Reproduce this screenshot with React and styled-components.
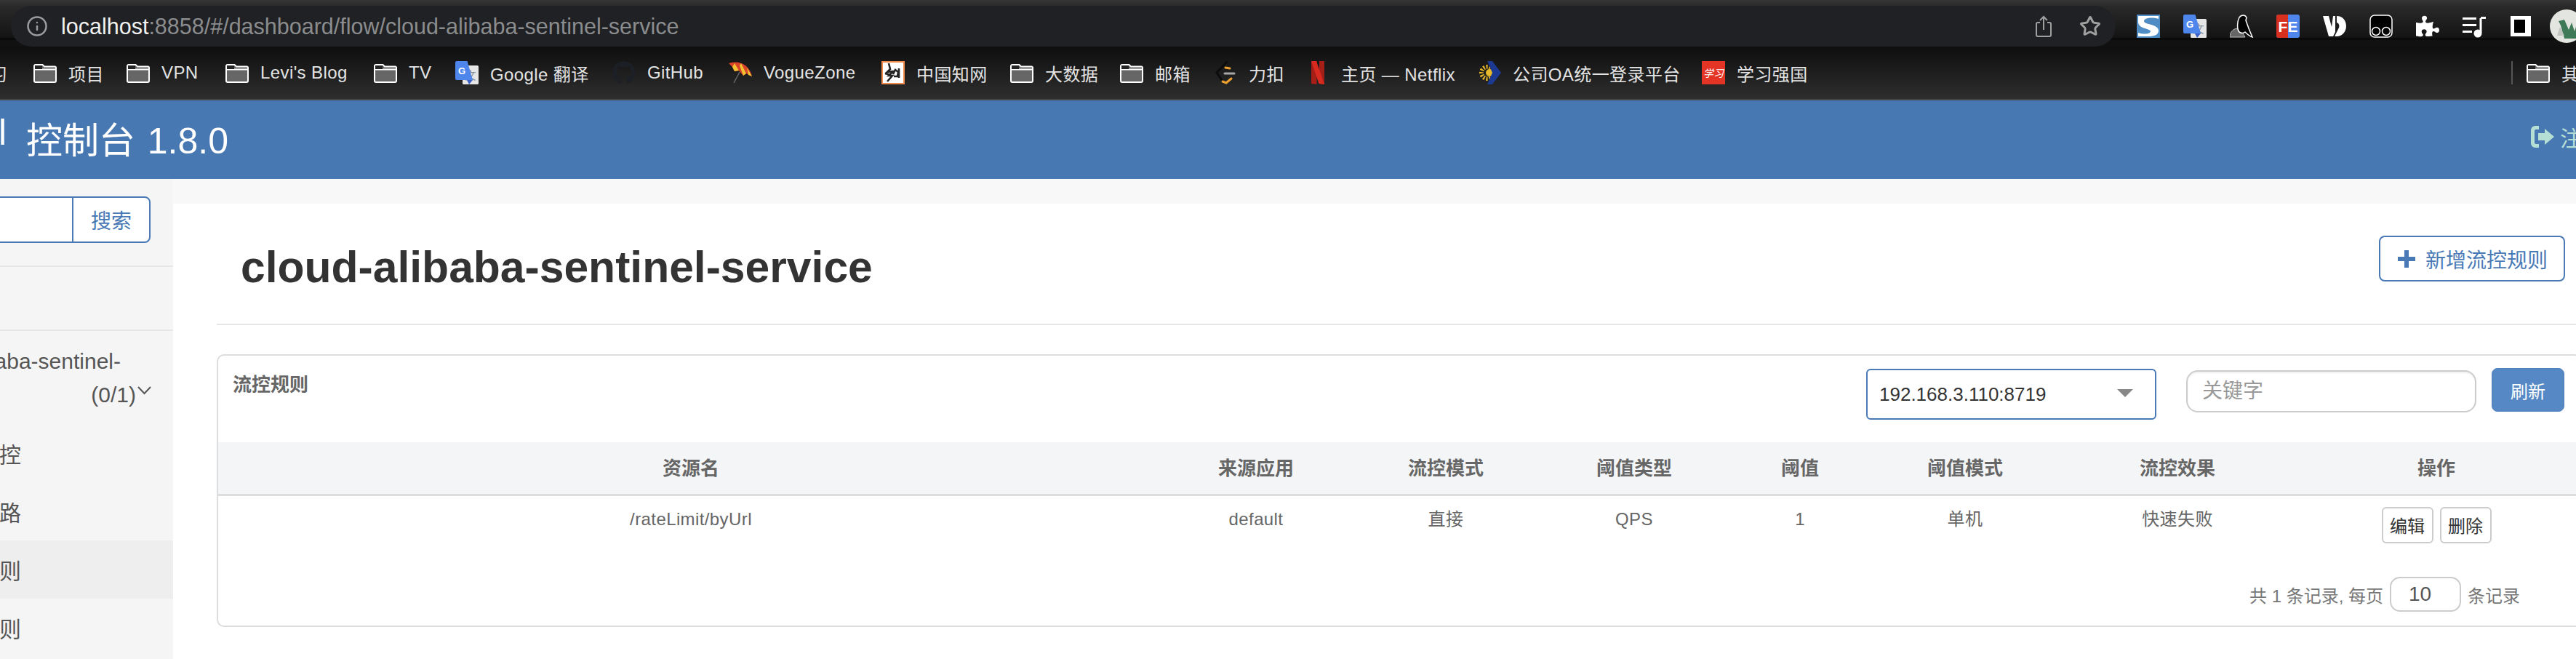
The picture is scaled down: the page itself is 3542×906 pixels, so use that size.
import React from "react";
import styled, { createGlobalStyle } from "styled-components";
import { FaGithub, FaPuzzlePiece } from "react-icons/fa";
import { Info, Star } from "lucide-react";

const FONT = `"Liberation Sans", "Noto Sans CJK SC", sans-serif`;
const BLUE = "#4a7ab5";

const Global = createGlobalStyle`
  html, body {
    margin: 0;
    width: 3542px;
    height: 906px;
    overflow: hidden;
    background: #fff;
    font-family: ${FONT};
  }
  * { box-sizing: border-box; }
`;

const Page = styled.div`
  width: 3542px;
  height: 906px;
  overflow: hidden;
  display: flex;
  flex-direction: column;
`;

/* browser chrome */
const Toolbar = styled.div`
  height: 64px;
  flex-shrink: 0;
  padding: 8px 0 0 15px;
  display: flex;
  align-items: center;
  background: linear-gradient(#363636 0, #2a2a2a 8px, #141414 52px, #0a0a0a 52px, #0a0a0a 55px, #111 55px);
`;

const AddressPill = styled.div`
  width: 2894px;
  height: 56px;
  flex-shrink: 0;
  border-radius: 28px;
  background: #202124;
  display: flex;
  align-items: center;
  padding: 0 20px 0 21px;
  color: #9a9b9d;
`;

const Url = styled.div`
  margin-left: 18px;
  flex: 1;
  font-size: 30.5px;
  color: #8b8c8e;
  white-space: nowrap;
  b { font-weight: 400; color: #f1f1f1; }
`;

const PillIcon = styled.svg`
  margin-left: ${(p) => p.$gap || 0}px;
  flex-shrink: 0;
`;

const Extensions = styled.div`
  display: flex;
  align-items: center;
  gap: 32px;
  margin-left: 29px;
  flex-shrink: 0;
`;

const ExtIcon = styled.svg`
  width: 32px;
  height: 32px;
  flex-shrink: 0;
`;

const Avatar = styled.svg`
  width: 46px;
  height: 46px;
  margin-left: -8px;
  flex-shrink: 0;
`;

const BookmarkBar = styled.div`
  height: 72px;
  flex-shrink: 0;
  display: flex;
  align-items: center;
  gap: 32px;
  background: linear-gradient(#0e0e0e, #2e2e2e);
  color: #e4e4e4;
  font-size: 24px;
  border-bottom: 0;
`;

const ClippedLabel = styled.div`
  width: 10px;
  margin-right: 4px;
  display: flex;
  justify-content: flex-end;
  white-space: nowrap;
  flex-shrink: 0;
`;

const Bookmark = styled.div`
  display: flex;
  align-items: center;
  gap: 16px;
  flex-shrink: 0;
`;

const BookmarkLabel = styled.span`
  width: ${(p) => (p.$w ? `${p.$w}px` : "auto")};
  white-space: nowrap;
  letter-spacing: 0.4px;
`;

const OtherBookmarks = styled.div`
  margin-left: auto;
  width: 89px;
  height: 32px;
  border-left: 2px solid #555;
  padding-left: 19px;
  display: flex;
  align-items: center;
  gap: 16px;
  flex-shrink: 0;
  overflow: hidden;
  white-space: nowrap;
`;

const ChromeEdge = styled.div`
  height: 2px;
  flex-shrink: 0;
  background: #454545;
`;

const IconBox = styled.svg`
  width: 32px;
  height: 32px;
  flex-shrink: 0;
`;

/* app header */
const Navbar = styled.header`
  height: 108px;
  flex-shrink: 0;
  background: #4878b2;
  display: flex;
  align-items: center;
  justify-content: space-between;
  color: #fff;
`;

const Brand = styled.div`
  width: 314px;
  display: flex;
  justify-content: flex-end;
  white-space: pre;
  font-size: 50px;
  word-spacing: 3px;
  flex-shrink: 0;
  margin-top: -6px;
`;

const BrandName = styled.span`
  margin-right: 10px;
`;

const Logout = styled.div`
  width: 62px;
  display: flex;
  align-items: center;
  gap: 8px;
  font-size: 30px;
  color: #b5ded5;
  white-space: nowrap;
  flex-shrink: 0;
  margin-top: -8px;
`;

const Body = styled.div`
  flex: 1;
  min-height: 0;
  display: flex;
`;

/* sidebar, scrolled partly off the left edge */
const Aside = styled.aside`
  width: 238px;
  flex-shrink: 0;
  background: #f5f5f5;
  overflow: hidden;
  color: #555;
  font-size: 30px;
`;

const SearchBlock = styled.div`
  height: 121px;
  padding-top: 24px;
  border-bottom: 2px solid #e7e7e7;
`;

const SearchGroup = styled.div`
  width: 227px;
  height: 64px;
  margin-left: -20px;
  display: flex;
  background: #fff;
  border: 2px solid ${BLUE};
  border-radius: 8px;
`;

const SearchInput = styled.div`
  flex: 1;
`;

const SearchButton = styled.div`
  width: 106px;
  border-left: 2px solid ${BLUE};
  color: ${BLUE};
  font-size: 28px;
  display: flex;
  align-items: center;
  justify-content: center;
`;

const HomeRow = styled.div`
  height: 88px;
  border-bottom: 2px solid #e7e7e7;
`;

const ServiceRow = styled.div`
  height: 128px;
  padding: 19px 0;
  line-height: 46px;
`;

const ServiceLine = styled.div`
  display: flex;
  justify-content: flex-end;
  align-items: center;
  white-space: nowrap;
  padding-right: ${(p) => p.$right}px;
`;

const NavItem = styled.div`
  height: 80px;
  display: flex;
  justify-content: flex-end;
  align-items: center;
  padding-right: 209px;
  white-space: nowrap;
  background: ${(p) => (p.$active ? "#eee" : "transparent")};
`;

/* main content */
const Main = styled.main`
  flex: 1;
  min-width: 0;
  background: #f8f8f8;
  padding-top: 34px;
  overflow: hidden;
`;

const Sheet = styled.div`
  height: 100%;
  background: #fff;
  padding-left: 60px;
`;

const Content = styled.div`
  width: 3252px;
`;

const PageHead = styled.div`
  height: 167px;
  display: flex;
  justify-content: space-between;
  align-items: flex-start;
  border-bottom: 2px solid #e6e6e6;
  padding: 0 23px 0 33px;
`;

const Title = styled.h1`
  margin: 52px 0 0;
  font-size: 60.6px;
  line-height: 70px;
  font-weight: 700;
  color: #333;
`;

const AddButton = styled.button`
  margin-top: 44px;
  width: 256px;
  height: 63px;
  background: #fff;
  border: 2px solid ${BLUE};
  border-radius: 8px;
  color: ${BLUE};
  font: 28px ${FONT};
  display: flex;
  align-items: center;
  padding: 0 0 0 24px;
  gap: 14px;
`;

const Panel = styled.section`
  margin-top: 40px;
  height: 375px;
  border: 2px solid #ddd;
  border-radius: 10px;
  overflow: hidden;
`;

const PanelHead = styled.div`
  height: 119px;
  display: flex;
  align-items: flex-start;
  padding-left: 20px;
`;

const PanelTitle = styled.div`
  margin-top: 22px;
  line-height: 36px;
  font-size: 26px;
  font-weight: 700;
  color: #666;
  margin-right: auto;
`;

const SelectBox = styled.div`
  width: 399px;
  height: 70px;
  margin-top: 18px;
  border: 2px solid ${BLUE};
  border-radius: 6px;
  padding: 0 30px 0 16px;
  display: flex;
  align-items: center;
  justify-content: space-between;
  font-size: 26px;
  color: #333;
`;

const Caret = styled.span`
  width: 0;
  height: 0;
  margin-top: -4px;
  border-left: 11px solid transparent;
  border-right: 11px solid transparent;
  border-top: 11px solid #888;
`;

const KeywordInput = styled.input`
  width: 399px;
  height: 58px;
  margin: 20px 0 0 41px;
  border: 2px solid #ccc;
  border-radius: 16px;
  padding: 0 20px;
  outline: none;
  font: 28px ${FONT};
  box-shadow: inset 0 2px 2px rgba(0, 0, 0, 0.06);
  &::placeholder { color: #999; }
`;

const RefreshButton = styled.button`
  width: 100px;
  height: 60px;
  margin: 17px 22px 0 21px;
  background: #5588c4;
  border: 1px solid #4e80bb;
  border-radius: 8px;
  color: #fff;
  font: 24px ${FONT};
  padding: 0;
`;

const Table = styled.table`
  width: 3248px;
  table-layout: fixed;
  border-collapse: collapse;
  font-size: 24px;
  color: #666;
`;

const Th = styled.th`
  height: 72px;
  background: #f4f5f7;
  border-bottom: 3px solid #ddd;
  font-size: 26px;
  font-weight: 700;
  color: #666;
  padding: 0 0 4px;
  &:last-child { padding-right: 10px; }
`;

const Td = styled.td`
  height: 100px;
  padding: 15px 0 0;
  text-align: center;
  vertical-align: top;
  line-height: 34px;
  letter-spacing: 0.4px;
  &:last-child { padding-right: 10px; }
`;

const RowButtons = styled.div`
  display: flex;
  justify-content: center;
  gap: 9px;
`;

const RowButton = styled.button`
  width: 71px;
  height: 50px;
  background: #fff;
  border: 2px solid #ccc;
  border-radius: 6px;
  color: #333;
  font: 24px ${FONT};
  padding: 0;
`;

const Pager = styled.div`
  margin-top: 13px;
  padding-right: 83px;
  display: flex;
  justify-content: flex-end;
  align-items: center;
  gap: 9px;
  font-size: 24px;
  color: #777;
`;

const PageSize = styled.input`
  width: 98px;
  height: 48px;
  border: 2px solid #ccc;
  border-radius: 14px;
  padding: 0 0 0 24px;
  font: 28px ${FONT};
  color: #555;
  outline: none;
`;

const Folder = () => (
  <IconBox viewBox="0 0 32 32">
    <path d="M1 6.500V27a2 2 0 0 0 2 2h26a2 2 0 0 0 2-2V9a1.500 1.500 0 0 0-1.500-1.500H15L12.500 5H3a2 2 0 0 0-2 1.500Z" fill="#666" stroke="#fff" strokeWidth="2" />
    <path d="M1.500 11.500h29" stroke="#fff" strokeWidth="2" />
    <path d="M2 6h10v5H2z" fill="#262626" />
  </IconBox>
);

const GoogleTranslate = ({ as }) => (
  <IconBox as={as} viewBox="0 0 32 32">
    <rect x="10" y="6" width="22" height="26" rx="1.500" fill="#e6e6e6" />
    <text x="21" y="25" fontSize="15" textAnchor="middle" fill="#8a8f98" fontFamily="Noto Sans CJK SC">文</text>
    <path d="M2 0h14.500L24 26H2a2 2 0 0 1-2-2V2a2 2 0 0 1 2-2Z" fill="#4f86ec" />
    <path d="M16 26h8l-5 6Z" fill="#3b5fc4" />
    <text x="9" y="18" fontSize="13" fontWeight="700" textAnchor="middle" fill="#fff" fontFamily="Liberation Sans">G</text>
  </IconBox>
);

const Umbrella = () => (
  <IconBox viewBox="0 0 32 32">
    <path d="M15 15 7 30" stroke="#6a6a6a" strokeWidth="1.500" />
    <path d="M0 3Q14-1 23 6 30 12 32 21L24 17 20 20 14 13 8 14 5 8Z" fill="#d8432a" />
    <path d="M8 3 14 13 8 14 5 8ZM17 3 24 17 20 20 15 6ZM25 9 32 21 27 19Z" fill="#f2c230" />
  </IconBox>
);

const Cnki = () => (
  <IconBox viewBox="0 0 32 32">
    <rect x="1" y="1" width="30" height="30" fill="#fff" stroke="#ee8a4c" strokeWidth="2" />
    <path d="M10 3l2 8-4 4 8-1-6 6 5 0-7 8M5 17l8 2M16 18l3-6 4 3-1 6-5 0M24 10v13" stroke="#222" strokeWidth="2.600" fill="none" />
  </IconBox>
);

const LeetCode = () => (
  <IconBox viewBox="0 0 32 32">
    <path d="M18 1 4 16l9 13" stroke="#0c0c0c" strokeWidth="3" fill="none" strokeLinecap="round" />
    <path d="M22 10l-6-1M12 28l5 2 7-6" stroke="#eea12e" strokeWidth="3" fill="none" strokeLinecap="round" />
    <path d="M15 17h13" stroke="#a8a8a8" strokeWidth="3" strokeLinecap="round" />
  </IconBox>
);

const Netflix = () => (
  <IconBox viewBox="0 0 32 32">
    <path d="M7 0h7.500v32L7 31Z" fill="#a51e18" />
    <path d="M18 0h7v32l-7-1Z" fill="#a51e18" />
    <path d="M7 0h7l11 32-7.500-1Z" fill="#d92a20" />
  </IconBox>
);

const ChevronLogo = () => (
  <IconBox viewBox="0 0 32 32">
    <circle cx="13" cy="16" r="8" fill="none" stroke="#e8b92a" strokeWidth="6" strokeDasharray="2 2" />
    <circle cx="16" cy="16" r="5" fill="#e8b92a" />
    <path d="M13 0h7l12 16-12 16h-7l7-16Z" fill="#1c3a92" />
  </IconBox>
);

const XuexiLogo = () => (
  <IconBox viewBox="0 0 32 32">
    <rect width="32" height="32" fill="#e33426" />
    <text x="16" y="22" fontSize="14" fontStyle="italic" textAnchor="middle" fill="#fff" fontFamily="Noto Sans CJK SC">学习</text>
  </IconBox>
);

const BOOKMARKS = [
  { icon: <Folder />, label: "项目", w: 48 },
  { icon: <Folder />, label: "VPN", w: 56 },
  { icon: <Folder />, label: "Levi's Blog", w: 124 },
  { icon: <Folder />, label: "TV", w: 32 },
  { icon: <GoogleTranslate />, label: "Google 翻译", w: 136 },
  { icon: <FaGithub size={32} color="#1c2026" />, label: "GitHub", w: 80 },
  { icon: <Umbrella />, label: "VogueZone", w: 130 },
  { icon: <Cnki />, label: "中国知网", w: 97 },
  { icon: <Folder />, label: "大数据", w: 71 },
  { icon: <Folder />, label: "邮箱", w: 49 },
  { icon: <LeetCode />, label: "力扣", w: 47 },
  { icon: <Netflix />, label: "主页 — Netflix", w: 156 },
  { icon: <ChevronLogo />, label: "公司OA统一登录平台", w: 228 },
  { icon: <XuexiLogo />, label: "学习强国" },
];

const COLUMNS = [
  ["资源名", 1300],
  ["来源应用", 254],
  ["流控模式", 268],
  ["阈值类型", 250],
  ["阈值", 206],
  ["阈值模式", 248],
  ["流控效果", 336],
  ["操作", 386],
];

const ROW = ["/rateLimit/byUrl", "default", "直接", "QPS", "1", "单机", "快速失败"];

export default function App() {
  return (
    <Page>
      <Global />
      <Toolbar>
        <AddressPill>
          <Info size={30} strokeWidth={2} />
          <Url>
            <b>localhost</b>:8858/#/dashboard/flow/cloud-alibaba-sentinel-service
          </Url>
          <PillIcon width="22" height="30" viewBox="0 0 22 30" fill="none" stroke="#a0a0a0" strokeWidth="2">
            <path d="M6 10H3a2 2 0 0 0-2 2v15a2 2 0 0 0 2 2h16a2 2 0 0 0 2-2V12a2 2 0 0 0-2-2h-3" />
            <path d="M11 20V2M6 7l5-5 5 5" />
          </PillIcon>
          <PillIcon as={Star} $gap={38} size={30} color="#a0a0a0" strokeWidth={2.4} />
        </AddressPill>
        <Extensions>
          <ExtIcon viewBox="0 0 32 32">
            <rect width="32" height="32" fill="#4f8cc4" />
            <path d="M2 2h28v4C20 3 10 5 10 9c0 5 20 4 20 13 0 6-6 8-14 8H2v-5c10 3 17 1 17-2 0-4-17-3-17-13Z" fill="#fff" />
          </ExtIcon>
          <GoogleTranslate as={ExtIcon} />
          <ExtIcon viewBox="0 0 32 32">
            <path d="M0 31C0 23 6 18 14 19L21 31Z" fill="#666" stroke="#bbb" strokeWidth="1" />
            <path d="M13 4C16 0 21 0 23 4L22 8C24 14 27 22 31 31 27 30 24 27 21 24 17 27 12 25 11 20 10 14 11 8 13 4Z" fill="#000" stroke="#fff" strokeWidth="1.500" />
          </ExtIcon>
          <ExtIcon viewBox="0 0 32 32">
            <rect width="32" height="32" rx="3" fill="#4f86ec" />
            <path d="M3 0h13v32H3a3 3 0 0 1-3-3V3a3 3 0 0 1 3-3Z" fill="#d8301f" />
            <text x="16" y="24" fontSize="21" fontWeight="700" textAnchor="middle" fill="#fff" fontFamily="Liberation Sans">FE</text>
          </ExtIcon>
          <ExtIcon viewBox="0 0 32 32">
            <path d="M0 2h8l4 15 2-15h3v22l-3 6h-6Z" fill="#fff" />
            <path d="M19 2c8 0 13 6 13 14s-6 14-13 14h-3l6-12c1-3 0-6-3-7Z" fill="#fff" />
          </ExtIcon>
          <ExtIcon viewBox="0 0 32 32" fill="none" stroke="#fff">
            <rect x="1" y="1" width="30" height="30" rx="6" fill="#000" strokeWidth="1.500" />
            <circle cx="9" cy="23" r="5.500" strokeWidth="1.500" />
            <circle cx="23" cy="23" r="5.500" strokeWidth="1.500" />
          </ExtIcon>
          <ExtIcon as={FaPuzzlePiece} color="#fff" />
          <ExtIcon viewBox="0 0 32 32">
            <path d="M0 4h19v3H0zM0 13h19v3H0zM0 22h13v3H0z" fill="#fff" />
            <path d="M25 5v20" stroke="#fff" strokeWidth="3" />
            <path d="M25 3h7v3h-7z" fill="#fff" />
            <circle cx="21" cy="26" r="5.500" fill="#fff" />
          </ExtIcon>
          <ExtIcon viewBox="0 0 32 32">
            <rect x="2" y="2" width="28" height="28" fill="#fff" />
            <rect x="7" y="7" width="15" height="18" fill="#000" />
          </ExtIcon>
          <Avatar viewBox="0 0 46 46">
            <circle cx="23" cy="23" r="23" fill="#e3e5e1" />
            <path d="M12 16l8-2 6 14 4-10 4 12 4-12 6 2-4 20H20l-5-18Z" fill="#3f7a58" />
            <path d="M14 24l6 12H10Z" fill="#bfc3bd" />
          </Avatar>
        </Extensions>
      </Toolbar>

      <BookmarkBar>
        <ClippedLabel>学习</ClippedLabel>
        {BOOKMARKS.map((b) => (
          <Bookmark key={b.label}>
            {b.icon}
            <BookmarkLabel $w={b.w}>{b.label}</BookmarkLabel>
          </Bookmark>
        ))}
        <OtherBookmarks>
          <Folder />
          其他书签
        </OtherBookmarks>
      </BookmarkBar>
      <ChromeEdge />

      <Navbar>
        <Brand>
          <BrandName>Sentinel </BrandName>控制台 1.8.0
        </Brand>
        <Logout>
          <svg width="32" height="30" viewBox="0 0 32 30" fill="#b5ded5" style={{ flexShrink: 0 }}>
            <path d="M11 0H6a6 6 0 0 0-6 6v18a6 6 0 0 0 6 6h5v-5H7a2 2 0 0 1-2-2V7a2 2 0 0 1 2-2h4Z" />
            <path d="M10 10h9V4l13 11-13 11v-6h-9Z" />
          </svg>
          注销
        </Logout>
      </Navbar>

      <Body>
        <Aside>
          <SearchBlock>
            <SearchGroup>
              <SearchInput />
              <SearchButton>搜索</SearchButton>
            </SearchGroup>
          </SearchBlock>
          <HomeRow />
          <ServiceRow>
            <ServiceLine $right={72}>cloud-alibaba-sentinel-</ServiceLine>
            <ServiceLine $right={30}>
              (0/1)
              <svg width="19" height="12" viewBox="0 0 19 12" fill="none" stroke="#555" strokeWidth="2" style={{ margin: "-12px 0 0 2px" }}>
                <path d="M1 1l8.500 9L18 1" />
              </svg>
            </ServiceLine>
          </ServiceRow>
          <NavItem>实时监控</NavItem>
          <NavItem>簇点链路</NavItem>
          <NavItem $active>流控规则</NavItem>
          <NavItem>降级规则</NavItem>
        </Aside>

        <Main>
          <Sheet>
            <Content>
              <PageHead>
                <Title>cloud-alibaba-sentinel-service</Title>
                <AddButton>
                  <svg width="24" height="24" viewBox="0 0 24 24" fill={BLUE}>
                    <path d="M9 0h6v9h9v6h-9v9H9v-9H0V9h9Z" />
                  </svg>
                  新增流控规则
                </AddButton>
              </PageHead>

              <Panel>
                <PanelHead>
                  <PanelTitle>流控规则</PanelTitle>
                  <SelectBox>
                    192.168.3.110:8719
                    <Caret />
                  </SelectBox>
                  <KeywordInput placeholder="关键字" />
                  <RefreshButton>刷新</RefreshButton>
                </PanelHead>

                <Table>
                  <colgroup>
                    {COLUMNS.map(([name, width]) => (
                      <col key={name} width={width} />
                    ))}
                  </colgroup>
                  <thead>
                    <tr>
                      {COLUMNS.map(([name]) => (
                        <Th key={name}>{name}</Th>
                      ))}
                    </tr>
                  </thead>
                  <tbody>
                    <tr>
                      {ROW.map((cell) => (
                        <Td key={cell}>{cell}</Td>
                      ))}
                      <Td>
                        <RowButtons>
                          <RowButton>编辑</RowButton>
                          <RowButton>删除</RowButton>
                        </RowButtons>
                      </Td>
                    </tr>
                  </tbody>
                </Table>

                <Pager>
                  共 1 条记录, 每页
                  <PageSize defaultValue="10" />
                  条记录
                </Pager>
              </Panel>
            </Content>
          </Sheet>
        </Main>
      </Body>
    </Page>
  );
}
